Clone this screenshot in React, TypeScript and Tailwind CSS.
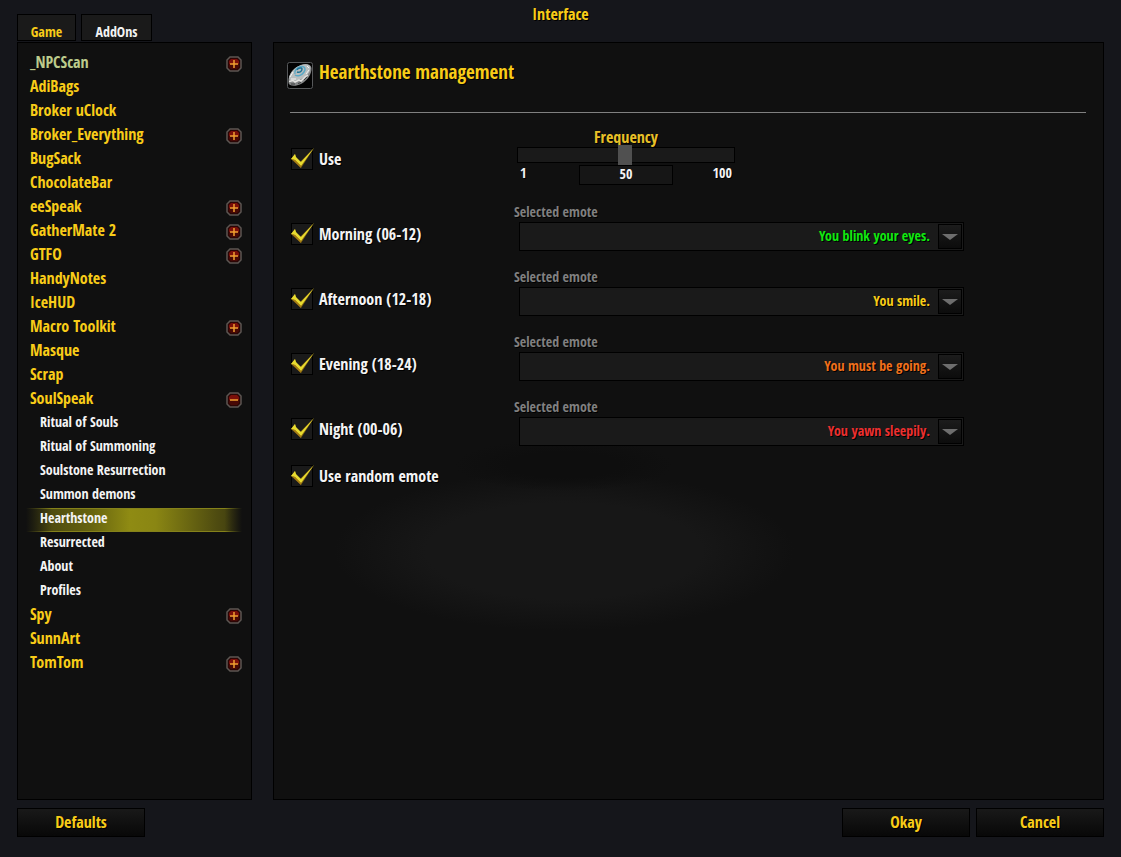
import { useState } from 'react'
import type { ReactNode } from 'react'

type AddOn = {
  name: string
  expandable?: boolean
  children?: string[]
}

const addOns: AddOn[] = [
  { name: '_NPCScan', expandable: true },
  { name: 'AdiBags' },
  { name: 'Broker uClock' },
  { name: 'Broker_Everything', expandable: true },
  { name: 'BugSack' },
  { name: 'ChocolateBar' },
  { name: 'eeSpeak', expandable: true },
  { name: 'GatherMate 2', expandable: true },
  { name: 'GTFO', expandable: true },
  { name: 'HandyNotes' },
  { name: 'IceHUD' },
  { name: 'Macro Toolkit', expandable: true },
  { name: 'Masque' },
  { name: 'Scrap' },
  {
    name: 'SoulSpeak',
    expandable: true,
    children: [
      'Ritual of Souls',
      'Ritual of Summoning',
      'Soulstone Resurrection',
      'Summon demons',
      'Hearthstone',
      'Resurrected',
      'About',
      'Profiles',
    ],
  },
  { name: 'Spy', expandable: true },
  { name: 'SunnArt' },
  { name: 'TomTom', expandable: true },
]

const periods = [
  { id: 'morning', label: 'Morning (06-12)', emote: 'You blink your eyes.', color: 'text-[#10e810]' },
  { id: 'afternoon', label: 'Afternoon (12-18)', emote: 'You smile.', color: 'text-[#f8cc18]' },
  { id: 'evening', label: 'Evening (18-24)', emote: 'You must be going.', color: 'text-[#f0701c]' },
  { id: 'night', label: 'Night (00-06)', emote: 'You yawn sleepily.', color: 'text-[#ec3030]' },
]

function ExpandIcon({ open }: { open: boolean }) {
  return (
    <svg viewBox="0 0 16 16" className="h-4 w-4" aria-hidden="true">
      <path d="M4 1h8l3 3v8l-3 3H4l-3-3V4z" fill="#2a0605" stroke="#5c5652" strokeWidth="1.5" />
      <path d="M5 3h6l2 2v3H3V5z" fill="#7a0f09" />
      <path d="M3 8h10v3l-2 2H5l-2-2z" fill="#470805" />
      <path d="M4 8h8" stroke="#f0a030" strokeWidth="1.5" />
      {!open && <path d="M8 4v8" stroke="#f0a030" strokeWidth="1.5" />}
    </svg>
  )
}

function HearthstoneIcon() {
  return (
    <svg viewBox="0 0 26 27" className="h-[27px] w-[26px]" aria-hidden="true">
      <rect x="0.5" y="0.5" width="25" height="26" rx="2" fill="#020202" stroke="#56585a" />
      <path d="M1.500 17C3 10 8 5 14 3C19 1 24 2 24.500 6C25 12 20 19 14 22C8 25 2 24 1.500 21z" fill="#858788" />
      <path d="M2 16C3 10 8 5 14 3C19 1.500 23.500 2.500 23.500 6C23 11 18 16 12 18C7 19.500 2 19.500 2 16z" fill="#b9bebf" />
      <path d="M8 12C7 9 10 5 14 4.500C18 4 19 7 17 10C15 13 11 15 8 13" fill="none" stroke="#5aa9c6" strokeWidth="1.500" />
      <path d="M10 8c1-2 5-3 5-1s-2 4-5 3" fill="none" stroke="#1f7396" strokeWidth="1.500" />
      <path d="M2 19.500l4-1 2 1.500 4-2 2 1 4-4 3-2" fill="none" stroke="#e4e4e2" strokeWidth="1.500" />
      <path d="M3 15l3-5M20 4l2 2M4 17l5 0M19 12l3-4" stroke="#f4f4f2" strokeWidth="1" />
      <path d="M4 22l4 0M11 21.500l3-1M17 18l3-3" stroke="#3e4040" strokeWidth="1" />
    </svg>
  )
}

function CheckMark() {
  return (
    <svg
      viewBox="0 0 24 22"
      className="pointer-events-none absolute top-0 left-0 hidden h-[22px] w-6 peer-checked:block"
      aria-hidden="true"
    >
      <path d="M0 11l4-5 1 4 4 4L23 0 10 20z" fill="#8a6a10" />
      <path d="M0 11l4-5 1 3 5 5L23 0 10 18 4 12z" fill="#e8dc30" />
      <path d="M1 11l3 1 6 6v2z" fill="#a87c14" />
    </svg>
  )
}

function Check({ children }: { children: ReactNode }) {
  return (
    <label className="flex h-[22px] items-center gap-1.5">
      <span className="relative h-[22px] w-[22px]">
        <input
          type="checkbox"
          defaultChecked
          className="peer block h-[22px] w-[22px] appearance-none border border-black bg-[#1a1a1a]"
        />
        <CheckMark />
      </span>
      {children}
    </label>
  )
}

function PanelButton({ children }: { children: ReactNode }) {
  return (
    <button
      type="button"
      className="h-[29px] w-32 border border-black bg-linear-to-b from-[#191919] to-[#080808] pb-0.5 text-[#f8cc18] [text-shadow:1px_1px_0_#000]"
    >
      {children}
    </button>
  )
}

function Sidebar() {
  const [selected, setSelected] = useState('Hearthstone')

  return (
    <nav className="w-[235px] shrink-0 border border-black bg-[#101010] pt-[9px] pr-[9px] pl-2" aria-label="AddOns">
      <ul>
        {addOns.map((addOn) => (
          <li key={addOn.name}>
            <div className="flex h-6 items-start justify-between pl-1">
              <button
                type="button"
                className={addOn.name === '_NPCScan' ? 'leading-5 text-[#bccb8c]' : 'leading-5 text-[#f8cc18]'}
              >
                {addOn.name}
              </button>
              {addOn.expandable && (
                <button type="button" className="flex h-6 items-center" aria-label={`Toggle ${addOn.name}`}>
                  <ExpandIcon open={!!addOn.children} />
                </button>
              )}
            </div>
            {addOn.children && (
              <ul className="text-[14px]">
                {addOn.children.map((child) => (
                  <li key={child}>
                    <button
                      type="button"
                      onClick={() => setSelected(child)}
                      className={
                        child === selected
                          ? 'flex h-6 w-full items-start bg-[linear-gradient(to_right,#101010,transparent_12%,transparent_92%,#101010),linear-gradient(#85821a_1px,transparent_1px,transparent_23px,#85821a_23px),linear-gradient(to_right,#3f3d10,#66630f_30%,#8f8b13_48%,#8a8613_60%,#4f4c10_88%,#3a3810)] pl-3.5 leading-5'
                          : 'flex h-6 w-full items-start pl-3.5 leading-5'
                      }
                    >
                      {child}
                    </button>
                  </li>
                ))}
              </ul>
            )}
          </li>
        ))}
      </ul>
    </nav>
  )
}

function Frequency() {
  const [value, setValue] = useState(50)

  return (
    <div className="ml-[3px] w-[218px]">
      <label htmlFor="frequency" className="block text-center leading-5 text-[#e8c028]">
        Frequency
      </label>
      <input
        id="frequency"
        type="range"
        min={1}
        max={100}
        value={value}
        onChange={(e) => setValue(Number(e.target.value))}
        className="block h-4 w-full appearance-none border border-black bg-[#1a1a1a] [&::-webkit-slider-thumb]:h-5 [&::-webkit-slider-thumb]:w-3.5 [&::-webkit-slider-thumb]:appearance-none [&::-webkit-slider-thumb]:bg-[#505050]"
      />
      <div className="mt-0.5 flex items-start justify-between px-[3px] text-[14px] leading-5">
        <span className="w-9 leading-4">1</span>
        <input
          aria-label="Frequency value"
          value={value}
          onChange={(e) => setValue(Number(e.target.value) || 1)}
          className="h-5 w-[94px] border border-black bg-[#161616] pb-0.5 text-center"
        />
        <span className="w-9 text-right leading-4">100</span>
      </div>
    </div>
  )
}

function EmoteSelect({ id, emote, color }: { id: string; emote: string; color: string }) {
  return (
    <div className="text-[14px]">
      <label htmlFor={id} className="block leading-5 text-[#808080]">
        Selected emote
      </label>
      <div className="relative ml-[5px]">
        <select
          id={id}
          className={`block h-[29px] w-full appearance-none border border-black bg-[#1a1a1a] pr-[33px] pb-0.5 [text-align-last:right] [text-shadow:1px_1px_0_#000] ${color}`}
        >
          <option>{emote}</option>
        </select>
        <span className="pointer-events-none absolute top-0.5 right-0.5 flex h-[25px] w-6 items-center justify-center border border-black bg-linear-to-b from-[#1c1c1c] to-[#0c0c0c]">
          <svg viewBox="0 0 16 6" className="h-1.5 w-4" aria-hidden="true">
            <path d="M0 0h16L8 6z" fill="#6e6e6e" />
          </svg>
        </span>
      </div>
    </div>
  )
}

export default function App() {
  return (
    <div className="flex min-h-screen flex-col bg-[#15161b] px-[17px] pb-5 font-['Open_Sans_Condensed','Open_Sans',sans-serif] text-[16px] font-bold text-[#f4f4f4] [text-shadow:1px_1px_0_#000]">
      <header className="grid h-[42px] grid-cols-[1fr_auto_1fr]">
        <div className="flex items-end gap-[5px] pb-px text-[14px]" role="tablist">
          <button type="button" role="tab" className="h-[27px] w-[59px] border border-black bg-[#1a1a1a] pt-1.5 text-[#f8cc18]">
            Game
          </button>
          <button type="button" role="tab" className="h-[27px] w-[71px] border border-black bg-[#1a1a1a] pt-1.5">
            AddOns
          </button>
        </div>
        <h1 className="pt-1 leading-5 text-[#f8cc18]">Interface</h1>
      </header>

      <div className="flex flex-1 gap-[21px]">
        <Sidebar />

        <main className="flex-1 border border-black bg-[#101010] bg-[radial-gradient(ellipse_110px_26px_at_290px_422px,#0e0e0e_50%,transparent),radial-gradient(ellipse_230px_80px_at_290px_508px,#171717_60%,transparent)] pr-[17px] pl-4">
          <div className="-ml-[3px] flex items-start gap-1.5 pt-[19px]">
            <HearthstoneIcon />
            <h2 className="text-[19px] leading-5 text-[#f8cc18]">Hearthstone management</h2>
          </div>
          <hr className="mt-[23px] border-[#808080]" />

          <form className="mt-3.5 ml-px grid grid-cols-[223px_450px] gap-y-4">
            <div className="h-[59px] pt-[21px]">
              <Check>Use</Check>
            </div>
            <Frequency />

            {periods.map((period) => (
              <div key={period.id} className="col-span-2 grid h-[49px] grid-cols-subgrid">
                <div className="pt-[21px]">
                  <Check>{period.label}</Check>
                </div>
                <EmoteSelect id={period.id} emote={period.emote} color={period.color} />
              </div>
            ))}

            <div className="pt-[3px]">
              <Check>Use random emote</Check>
            </div>
          </form>
        </main>
      </div>

      <footer className="flex justify-between pt-2">
        <PanelButton>Defaults</PanelButton>
        <div className="flex gap-1.5">
          <PanelButton>Okay</PanelButton>
          <PanelButton>Cancel</PanelButton>
        </div>
      </footer>
    </div>
  )
}
